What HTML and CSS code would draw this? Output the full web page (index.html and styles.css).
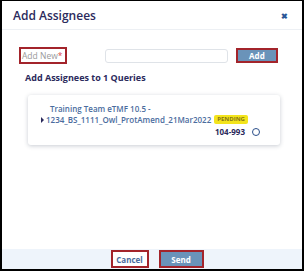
FILE: index.html
```html
<!DOCTYPE html>
<html lang="en">
<head>
  <meta charset="UTF-8" />
  <title>Add Assignees</title>
  <link rel="stylesheet" href="styles.css">
</head>
<body>
  <div class="modal">
    <div class="modal-header">
      <div class="modal-title">Add Assignees</div>
      <div class="close">&#x2716;</div>
    </div>

    <div class="modal-body">
      <div class="add-row">
        <div class="add-label">Add New<span class="req">*</span></div>
        <input class="add-input" type="text" />
        <button class="btn add">Add</button>
      </div>
      <div class="subtitle">Add Assignees to 1 Queries</div>

      <div class="card">
        <div class="doc-name">Training Team eTMF 10.5 -</div>
        <div class="doc-row">
          <span class="caret"></span>
          <span class="doc-id">1234_BS_1111_Owl_ProtAmend_21Mar2022</span>
          <span class="badge">PENDING</span>
        </div>
        <div class="query-row">
          <span class="query-no">104-993</span>
          <span class="radio"></span>
        </div>
      </div>
    </div>

    <div class="modal-footer">
      <button class="btn cancel">Cancel</button>
      <button class="btn send">Send</button>
    </div>
  </div>
</body>
</html>
```

FILE: styles.css
```css
body {
  font-family: 'Open Sans', sans-serif;
  margin: 0;
  padding: 0;
  background: #000;
}
.modal {
  width: 300px;
  height: 268px;
  margin: 1px 2px 2px 2px;
  background: #fff;
  display: flex;
  flex-direction: column;
}
.modal-header {
  height: 28px;
  display: flex;
  justify-content: space-between;
  align-items: center;
  padding: 0 14px 0 11px;
  border-bottom: 1px solid #edf0f4;
}
.modal-title {
  font-size: 12px;
  font-weight: 600;
  color: #2b2a5c;
}
.close {
  font-size: 8px;
  font-weight: 700;
  color: #2b5797;
}
.modal-body {
  flex: 1;
  padding: 17px 24px 0 17px;
}
.add-row {
  display: flex;
  align-items: center;
}
.add-label {
  width: 46px;
  height: 13px;
  border: 2px solid #a3242b;
  font-size: 8.5px;
  line-height: 13px;
  color: #9a9a9a;
  padding-left: 1px;
}
.req {
  color: #d9434b;
}
.add-input {
  width: 121px;
  height: 12px;
  margin-left: 38px;
  border: 1px solid #dfe3e8;
  border-radius: 3px;
  padding: 0;
}
.btn {
  font-family: 'Open Sans', sans-serif;
  font-size: 8px;
  font-weight: 700;
  border: 2px solid #a3242b;
  cursor: pointer;
  padding: 0;
}
.btn.add {
  width: 45px;
  height: 15px;
  margin-left: 8px;
  background: #6a93b9;
  color: #fff;
}
.subtitle {
  margin-top: 7px;
  padding-left: 6px;
  font-size: 9px;
  font-weight: 700;
  color: #2b2a5c;
}
.card {
  margin: 11px 0 0 9px;
  width: 252px;
  height: 50px;
  box-sizing: border-box;
  padding: 8px 20px 0 13px;
  background: #fff;
  border-radius: 3px;
  box-shadow: 0 1px 4px rgba(40, 50, 80, 0.25);
  font-size: 8px;
  font-weight: 600;
  color: #4a6c9e;
}
.doc-name {
  padding-left: 9px;
  line-height: 11px;
}
.doc-row {
  display: flex;
  align-items: center;
  line-height: 11px;
}
.caret {
  width: 0;
  height: 0;
  border-left: 3px solid #2b2a5c;
  border-top: 3px solid transparent;
  border-bottom: 3px solid transparent;
  margin-right: 2px;
}
.badge {
  margin-left: 3px;
  background: #f3e41c;
  color: #857614;
  font-size: 6px;
  font-weight: 700;
  padding: 1px 3px;
  border-radius: 2px;
  line-height: 7px;
}
.query-row {
  display: flex;
  justify-content: flex-end;
  align-items: center;
  margin-top: 1px;
}
.query-no {
  font-weight: 700;
  color: #2b2a5c;
}
.radio {
  width: 6px;
  height: 6px;
  border: 1px solid #2b4f8a;
  border-radius: 50%;
  margin-left: 7px;
}
.modal-footer {
  height: 20px;
  background: #eef4fb;
  display: flex;
  justify-content: center;
  align-items: center;
  gap: 10px;
  padding-left: 10px;
}
.btn.cancel {
  width: 38px;
  height: 18px;
  background: #fff;
  color: #4a6c9e;
}
.btn.send {
  width: 45px;
  height: 18px;
  background: #6a93b9;
  color: #fff;
}
```
